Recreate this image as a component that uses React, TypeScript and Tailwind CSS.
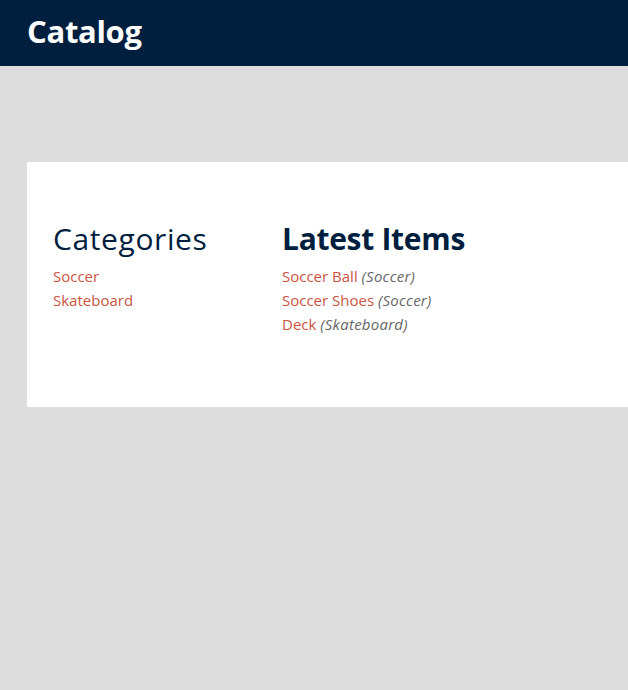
import React from "react";

export default function App() {
  const items = [
    { name: "Soccer Ball", cat: "Soccer" },
    { name: "Soccer Shoes", cat: "Soccer" },
    { name: "Deck", cat: "Skateboard" },
  ];
  return (
    <div className="w-full min-h-screen bg-[#dddddd] overflow-hidden font-['Open_Sans',sans-serif]">
      <header className="h-[66px] bg-[#001f3f] flex items-center pl-[27px]">
        <h1 className="text-white text-[31px] font-bold tracking-[-0.3px] leading-none pb-[3px]">Catalog</h1>
      </header>
      <div className="mt-[96px] ml-[27px] bg-white h-[245px] flex pl-[26px] pt-[59px]">
        <div className="w-[229px]">
          <h2 className="text-[#001f3f] text-[30px] leading-[36px] tracking-[0.6px]">Categories</h2>
          <div className="mt-[7px] flex flex-col text-[15px] leading-[24px]">
            <a className="text-[#c9553f]">Soccer</a>
            <a className="text-[#c9553f]">Skateboard</a>
          </div>
        </div>
        <div>
          <h2 className="text-[#001f3f] text-[30px] font-bold leading-[36px] tracking-[-0.3px]">Latest Items</h2>
          <div className="mt-[7px] flex flex-col text-[15px] leading-[24px]">
            {items.map((it) => (
              <div key={it.name}>
                <a className="text-[#c9553f]">{it.name}</a>{" "}
                <span className="italic text-[#666666] tracking-[0.25px]">({it.cat})</span>
              </div>
            ))}
          </div>
        </div>
      </div>
    </div>
  );
}
